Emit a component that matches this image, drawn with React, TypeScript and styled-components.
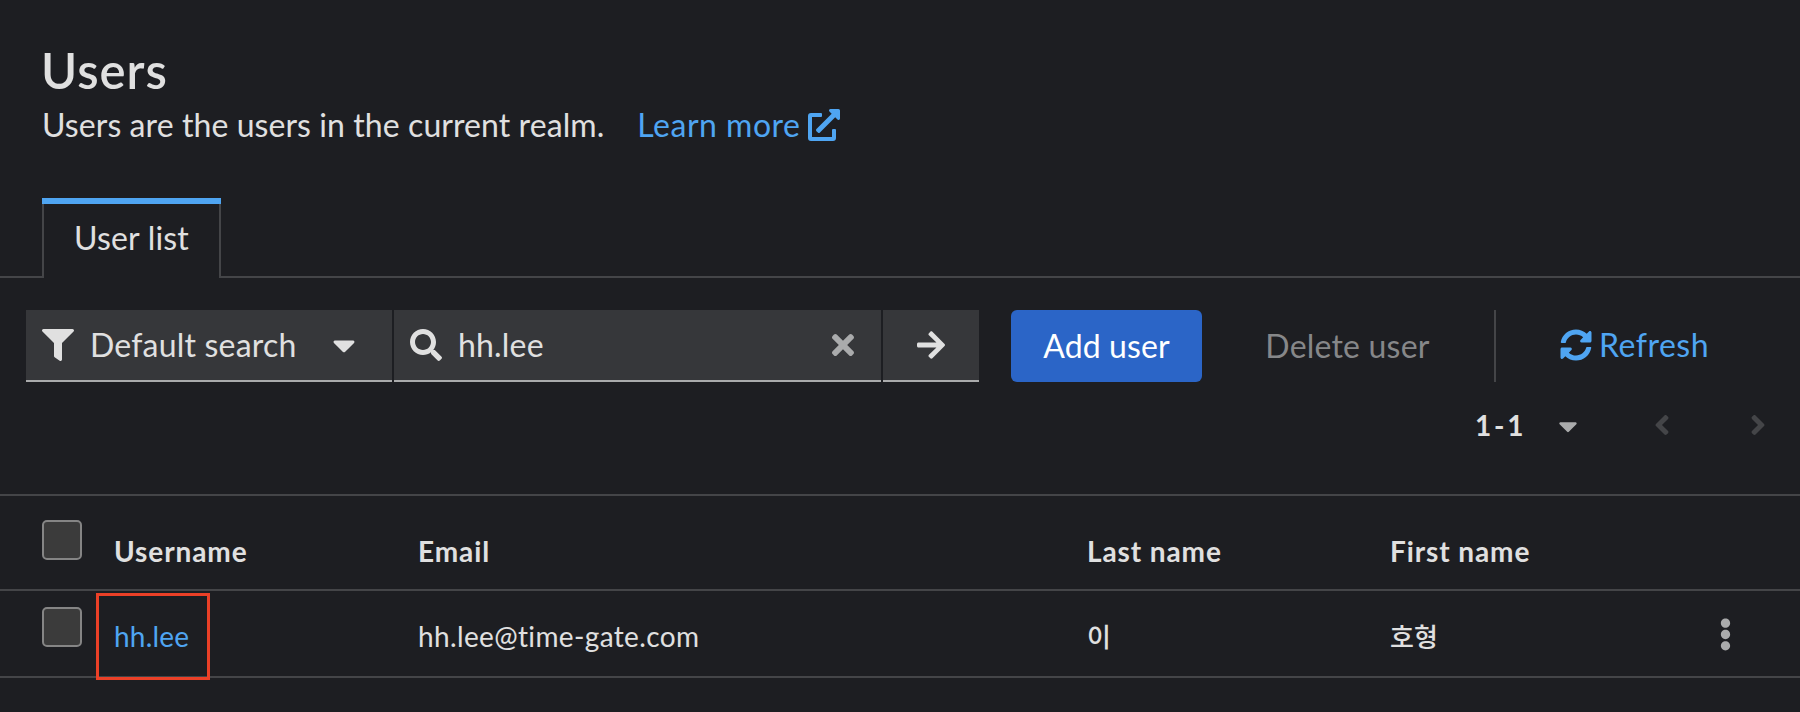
import React from "react";
import styled, { createGlobalStyle } from "styled-components";
import {
  FaAngleLeft,
  FaAngleRight,
  FaArrowRight,
  FaCaretDown,
  FaEllipsisV,
  FaExternalLinkAlt,
  FaFilter,
  FaSearch,
  FaSyncAlt,
  FaTimes,
} from "react-icons/fa";

const color = {
  page: "#1d1e22",
  field: "#36373a",
  text: "#e0e0e0",
  muted: "#aaabac",
  disabled: "#868789",
  faint: "#444548",
  link: "#4fa5f2",
  primary: "#2b65c7",
  highlight: "#eb4027",
};

const GlobalStyle = createGlobalStyle`
  * { box-sizing: border-box; }
  body {
    margin: 0;
    background: ${color.page};
    color: ${color.text};
    font-family: Lato, "Noto Sans CJK KR", sans-serif;
    font-size: 32px;
    font-variant-ligatures: none;
  }
  svg { display: block; flex: none; }
  button, input {
    font: inherit;
    color: inherit;
    letter-spacing: inherit;
    border: 0;
    padding: 0;
    background: none;
  }
`;

const Page = styled.main`
  width: 1800px;
  height: 712px;
  overflow: hidden;
  background: ${color.page};
`;

const Header = styled.header`
  height: 198px;
  padding: 40px 42px 0 41px;
`;

const Title = styled.h1`
  margin: 0;
  font-size: 49px;
  line-height: 60px;
  font-weight: 600;
  letter-spacing: 1px;
`;

const Description = styled.div`
  display: flex;
  align-items: center;
  height: 50px;
  line-height: 50px;
  padding-left: 1px;
  letter-spacing: 0.08px;
`;

const LearnMore = styled.a`
  display: flex;
  align-items: center;
  gap: 8px;
  margin-left: 33px;
  color: ${color.link};
  letter-spacing: 0.5px;
`;

const Tabs = styled.nav`
  display: flex;
  height: 80px;

  &::before,
  &::after {
    content: "";
    border-bottom: 2px solid ${color.faint};
  }
  &::before { width: 42px; }
  &::after { flex: 1; }
`;

const Tab = styled.button`
  width: 179px;
  border: solid;
  border-width: 0 2px;
  border-image: linear-gradient(${color.link} 6px, ${color.faint} 6px) 0 2;
  box-shadow: inset 0 6px ${color.link};
  line-height: 74px;
  padding-bottom: 1px;
  letter-spacing: 0.2px;
`;

const Toolbar = styled.div`
  display: flex;
  align-items: stretch;
  height: 72px;
  margin: 32px 0 0 26px;
  line-height: 70px;
`;

const Field = styled.div<{ $width: number }>`
  display: flex;
  align-items: center;
  width: ${(p) => p.$width}px;
  padding: 0 16px;
  margin-right: 2px;
  background: ${color.field};
  border-bottom: 2px solid ${color.muted};
  letter-spacing: 0.2px;
`;

const FieldLabel = styled.span`
  flex: 1;
  margin-left: 16px;
`;

const SearchInput = styled.input`
  flex: 1;
  min-width: 0;
  height: 70px;
  margin-left: 16px;
  outline: 0;
`;

const FieldCaret = styled(FaCaretDown)`
  margin-right: 14px;
`;

const ClearButton = styled.button`
  margin-right: 6px;
  color: ${color.muted};
`;

const GoButton = styled.button`
  display: flex;
  align-items: center;
  justify-content: center;
  width: 96px;
  background: ${color.field};
  border-bottom: 2px solid ${color.muted};
`;

const AddButton = styled.button`
  width: 191px;
  margin-left: 32px;
  border-radius: 6px;
  background: ${color.primary};
  color: #fff;
  letter-spacing: 0.1px;
`;

const DeleteButton = styled.button`
  width: 227px;
  margin-left: 32px;
  color: ${color.disabled};
  letter-spacing: 0.2px;
`;

const Divider = styled.div`
  width: 2px;
  margin: 0 64px 0 33px;
  background: ${color.faint};
`;

const RefreshButton = styled.button`
  display: flex;
  align-items: center;
  gap: 7px;
  padding-bottom: 2px;
  color: ${color.link};
  letter-spacing: 0.5px;
`;

const Pagination = styled.div`
  display: flex;
  align-items: center;
  justify-content: flex-end;
  height: 86px;
  margin-bottom: 26px;
  padding-right: 32px;
  color: ${color.faint};
`;

const Range = styled.button`
  display: flex;
  align-items: center;
  margin-right: 69px;
  color: ${color.text};
  font-size: 28px;
  font-weight: 700;
  letter-spacing: -0.5px;
  word-spacing: -3px;

  svg {
    margin: 2px 0 0 30px;
    color: ${color.muted};
  }
`;

const PageButton = styled.button`
  width: 20px;
  display: flex;
  justify-content: center;

  & + & { margin-left: 76px; }
`;

const Table = styled.div`
  border-top: 2px solid ${color.faint};
`;

const Row = styled.div<{ $head?: boolean }>`
  display: grid;
  grid-template-columns: 72px 304px 669px 303px 1fr 108px;
  height: ${(p) => (p.$head ? 95 : 87)}px;
  padding-left: 42px;
  border-bottom: 2px solid ${color.faint};
  font-size: 28px;
  font-weight: ${(p) => (p.$head ? 700 : 400)};
  letter-spacing: ${(p) => (p.$head ? 0.9 : 0.36)}px;
  line-height: ${(p) => (p.$head ? 110 : 90)}px;
`;

const Checkbox = styled.input.attrs({ type: "checkbox" })`
  appearance: none;
  width: 40px;
  height: 40px;
  margin: 0;
  border: 2px solid #858585;
  border-radius: 5px;
  background: #3b3b3b;
`;

const SelectCell = styled.div<{ $top: number }>`
  padding-top: ${(p) => p.$top}px;
  line-height: 0;
`;

const UserLink = styled.a`
  position: relative;
  color: ${color.link};
  letter-spacing: 0.2px;
`;

const Highlight = styled.span`
  position: absolute;
  left: -18px;
  top: 2px;
  width: 114px;
  height: 87px;
  border: 3px solid ${color.highlight};
`;

const KoreanName = styled.div`
  font-size: 26px;
  font-weight: 500;
  font-family: "Noto Sans CJK KR", sans-serif;
  line-height: 89px;
  letter-spacing: 0;
`;

const Actions = styled.button`
  display: flex;
  align-items: center;
  justify-content: center;
  width: 67px;
  padding-bottom: 4px;
  color: ${color.muted};
`;

export default function App() {
  return (
    <Page>
      <GlobalStyle />
      <Header>
        <Title>Users</Title>
        <Description>
          <span>Users are the users in the current realm.</span>
          <LearnMore>
            Learn more <FaExternalLinkAlt size={32} />
          </LearnMore>
        </Description>
      </Header>

      <Tabs>
        <Tab>User list</Tab>
      </Tabs>

      <Toolbar>
        <Field $width={366}>
          <FaFilter size={32} />
          <FieldLabel>Default search</FieldLabel>
          <FieldCaret size={36} />
        </Field>
        <Field $width={487}>
          <FaSearch size={32} />
          <SearchInput defaultValue="hh.lee" />
          <ClearButton aria-label="Clear">
            <FaTimes size={32} />
          </ClearButton>
        </Field>
        <GoButton aria-label="Search">
          <FaArrowRight size={32} />
        </GoButton>
        <AddButton>Add user</AddButton>
        <DeleteButton>Delete user</DeleteButton>
        <Divider />
        <RefreshButton>
          <FaSyncAlt size={32} />
          Refresh
        </RefreshButton>
      </Toolbar>

      <Pagination>
        <Range>
          1 - 1 <FaCaretDown size={30} />
        </Range>
        <PageButton aria-label="Previous">
          <FaAngleLeft size={32} />
        </PageButton>
        <PageButton aria-label="Next">
          <FaAngleRight size={32} />
        </PageButton>
      </Pagination>

      <Table>
        <Row $head>
          <SelectCell $top={24}>
            <Checkbox />
          </SelectCell>
          <div>Username</div>
          <div>Email</div>
          <div>Last name</div>
          <div>First name</div>
        </Row>
        <Row>
          <SelectCell $top={16}>
            <Checkbox />
          </SelectCell>
          <UserLink>
            hh.lee
            <Highlight />
          </UserLink>
          <div>hh.lee@time-gate.com</div>
          <KoreanName>이</KoreanName>
          <KoreanName>호형</KoreanName>
          <Actions aria-label="Actions">
            <FaEllipsisV size={33} />
          </Actions>
        </Row>
      </Table>
    </Page>
  );
}
